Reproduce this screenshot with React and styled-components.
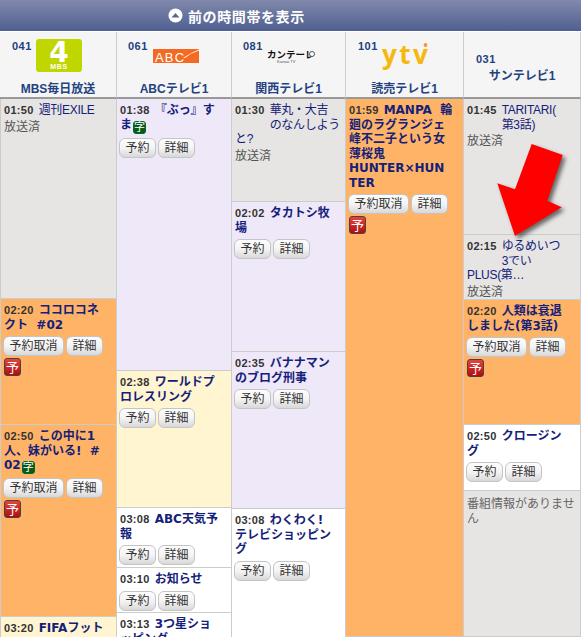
import React from 'react';
import styled, { createGlobalStyle } from 'styled-components';

const Global = createGlobalStyle`
  html, body { margin: 0; padding: 0; background: #fff; }
  body { font-family: "Liberation Sans", "Noto Sans CJK JP", sans-serif; }
`;

const Page = styled.div`
  position: relative;
  width: 581px;
  height: 637px;
  overflow: hidden;
  background: #fff;
`;

const TopBar = styled.div`
  height: 31px;
  margin-bottom: 1px;
  display: flex;
  align-items: center;
  gap: 5px;
  padding-left: 168px;
  background: linear-gradient(#8089ab, #505f91);
  color: #fff;
  font-size: 14px;
  font-weight: bold;
  letter-spacing: 0.6px;
`;

const Grid = styled.div`
  display: grid;
  grid-template-columns: 117px 115px 114px 118px 117px;
`;

const HeaderCell = styled.div`
  height: 67px;
  box-sizing: border-box;
  display: flex;
  flex-direction: column;
  justify-content: ${(p) => (p.$plain ? 'flex-start' : 'space-between')};
  padding: ${(p) => (p.$plain ? '20px 0 0' : '7px 0 0')};
  background: #f5f5f5;
  border-right: 1px solid #ccc;
  border-bottom: 2px solid #999;
`;

const LogoRow = styled.div`
  display: flex;
  align-items: flex-start;
  height: 34px;
  padding-left: ${(p) => p.$left}px;
  gap: ${(p) => p.$gap}px;
`;

const LogoSlot = styled.div`
  margin-top: ${(p) => p.$top}px;
`;

const ChannelNo = styled.div`
  color: #23427f;
  font-size: 11px;
  font-weight: bold;
  letter-spacing: 0.5px;
  line-height: 13px;
  margin-top: 1px;
  padding-left: ${(p) => p.$left || 0}px;
`;

const ChannelName = styled.div`
  color: #23427f;
  font-size: 12px;
  font-weight: bold;
  line-height: 16px;
  text-align: center;
  margin-top: ${(p) => p.$top || 0}px;
`;

const Column = styled.div`
  height: 538px;
  overflow: hidden;
  border-right: 1px solid #ccc;
  border-left: ${(p) => (p.$first ? '1px solid #ccc' : '0')};
`;

const tones = {
  done: '#e6e5e3',
  reserved: '#ffb366',
  lilac: '#efe8f8',
  yellow: '#fff5d0',
  white: '#ffffff',
  none: '#e6e5e3',
};

const Programme = styled.div`
  height: ${(p) => p.$h}px;
  box-sizing: border-box;
  overflow: hidden;
  padding: 4px 0 0 3px;
  background: ${(p) => tones[p.$tone]};
  border-bottom: 1px solid #ccc;
  font-size: 12px;
  line-height: 14.5px;
`;

const Time = styled.span`
  float: ${(p) => (p.$side ? 'left' : 'none')};
  height: ${(p) => (p.$side ? '15px' : 'auto')};
  color: #333;
  font-size: 11px;
  font-weight: bold;
  letter-spacing: 0.3px;
  margin-right: 5px;
`;

const Title = styled.span`
  color: #14217a;
  font-family: ${(p) => (p.$plain ? '"Liberation Sans"' : '"DejaVu Sans"')}, "Noto Sans CJK JP", sans-serif;
  font-weight: ${(p) => (p.$plain ? 'normal' : 'bold')};
  letter-spacing: ${(p) => (p.$plain ? '-0.3px' : '0')};
  white-space: pre-wrap;
`;

const Status = styled.div`
  clear: both;
  color: #555;
  font-size: 12px;
  line-height: 15px;
  margin-top: 2px;
`;

const Actions = styled.div`
  display: flex;
  gap: 2px;
  margin: 4px 0 0 -1px;
`;

const Button = styled.div`
  width: ${(p) => p.$w}px;
  height: 20px;
  box-sizing: border-box;
  display: flex;
  align-items: center;
  justify-content: center;
  border: 1px solid #c4c4c4;
  border-radius: 6px;
  background: linear-gradient(#fdfdfd 0%, #f4f4f4 50%, #d8d8d8 100%);
  color: #333;
  font-size: 12px;
  line-height: 1;
`;

const SubBadge = styled.span`
  display: inline-flex;
  align-items: center;
  justify-content: center;
  width: 13px;
  height: 13px;
  box-sizing: border-box;
  margin-left: 1px;
  border: 1px solid #063;
  border-radius: 3px;
  background: #0a5a12;
  color: #fff;
  font-size: 11px;
  line-height: 1;
  vertical-align: -2px;
`;

const RedBadge = styled.div`
  display: flex;
  align-items: center;
  justify-content: center;
  width: 17px;
  height: 18px;
  box-sizing: border-box;
  margin-top: 2px;
  border: 1px solid #444;
  border-radius: 3px;
  background: linear-gradient(#e8443c, #b00d10);
  color: #fff;
  font-size: 13px;
  line-height: 1;
`;

const ArrowMark = styled.svg`
  position: absolute;
  left: 490px;
  top: 138px;
  filter: drop-shadow(3px 3px 2px rgba(0, 0, 0, 0.55));
`;

const Notice = styled.div`
  color: #666;
  font-size: 12px;
  line-height: 15px;
  margin-top: 2px;
  white-space: pre-line;
`;

const UpIcon = () => (
  <svg width="15" height="15" viewBox="0 0 15 15">
    <circle cx="7.5" cy="7.5" r="7" fill="#fff" />
    <path d="M3.5 9.5 L7.5 5 L11.5 9.5 Z" fill="#5a6796" />
  </svg>
);

const Mbs = () => (
  <svg width="46" height="33" viewBox="0 0 46 33">
    <rect width="46" height="33" rx="3" fill="#bfd600" />
    <text x="23" y="23" textAnchor="middle" fontSize="28" fontWeight="bold" fill="#fff" fontFamily="DejaVu Sans">4</text>
    <text x="23" y="29.5" textAnchor="middle" fontSize="7" fontWeight="bold" letterSpacing="0.6" fill="#fff" fontFamily="Liberation Sans">MBS</text>
  </svg>
);

const Abc = () => (
  <svg width="46" height="15" viewBox="0 0 46 15">
    <rect width="46" height="14" fill="#f56a20" />
    <text x="2" y="13" fontSize="13" fill="#fff" letterSpacing="1.2" fontFamily="Liberation Sans">ABC</text>
    <path d="M30 9 Q37 4 46 0.5 L46 1.5 Q38 4 32 9 Z" fill="#fff" />
  </svg>
);

const Ktv = () => (
  <svg width="48" height="16" viewBox="0 0 48 16">
    <text x="0" y="10" fontSize="9.5" fontWeight="bold" fill="#111" fontFamily="Noto Sans CJK JP">カンテーレ</text>
    <text x="10" y="15" fontSize="4" fill="#555" fontFamily="Liberation Sans">Kansai TV</text>
    <circle cx="45" cy="6" r="2.5" fill="#fff" stroke="#555" />
  </svg>
);

const Ytv = () => (
  <svg width="46" height="30" viewBox="0 0 46 30">
    <text x="0" y="21" fontSize="26" fontWeight="700" fill="#f5b80c" letterSpacing="2.5" fontFamily="Open Sans">ytv</text>
    <circle cx="43.5" cy="2" r="1.9" fill="#f59a20" />
  </svg>
);

const channels = [
  { no: '041', name: 'MBS毎日放送', left: 12, gap: 4, logo: <Mbs />, top: 0 },
  { no: '061', name: 'ABCテレビ1', left: 11, gap: 5, logo: <Abc />, top: 10 },
  { no: '081', name: '関西テレビ1', left: 11, gap: 4, logo: <Ktv />, top: 9 },
  { no: '101', name: '読売テレビ1', left: 12, gap: 4, logo: <Ytv />, top: 4 },
  { no: '031', name: 'サンテレビ1', plain: true },
];

const Reserve = ({ taken }) => (
  <Actions>
    <Button $w={taken ? 61 : 37}>{taken ? '予約取消' : '予約'}</Button>
    <Button $w={37}>詳細</Button>
  </Actions>
);

const Show = ({ h, tone, time, title, sub, taken, bookable, plain, done }) => (
  <Programme $h={h} $tone={tone}>
    <Time $side={plain}>{time}</Time>
    <Title $plain={plain}>{title}</Title>
    {sub && <SubBadge>字</SubBadge>}
    {done && <Status>放送済</Status>}
    {bookable && <Reserve taken={taken} />}
    {taken && <RedBadge>予</RedBadge>}
  </Programme>
);

const schedule = [
  [
    { h: 200, tone: 'done', time: '01:50', title: '週刊EXILE', plain: true, done: true },
    { h: 126, tone: 'reserved', time: '02:20', title: 'ココロコネ\nクト  #02', bookable: true, taken: true },
    { h: 192, tone: 'reserved', time: '02:50', title: 'この中に1\n人、妹がいる!  #\n02', sub: true, bookable: true, taken: true },
    { h: 60, tone: 'yellow', time: '03:20', title: 'FIFAフット' },
  ],
  [
    { h: 272, tone: 'lilac', time: '01:38', title: '『ぶっ』す\nま', sub: true, bookable: true },
    { h: 137, tone: 'yellow', time: '02:38', title: 'ワールドプ\nロレスリング', bookable: true },
    { h: 60, tone: 'white', time: '03:08', title: 'ABC天気予\n報', bookable: true },
    { h: 45, tone: 'white', time: '03:10', title: 'お知らせ', bookable: true },
    { h: 60, tone: 'white', time: '03:13', title: '3つ星ショ\nッピング' },
  ],
  [
    { h: 103, tone: 'done', time: '01:30', title: '華丸・大吉\nのなんしよう\nと?', plain: true, done: true },
    { h: 150, tone: 'lilac', time: '02:02', title: 'タカトシ牧\n場', bookable: true },
    { h: 157, tone: 'lilac', time: '02:35', title: 'バナナマン\nのブログ刑事', bookable: true },
    { h: 140, tone: 'white', time: '03:08', title: 'わくわく!\nテレビショッピン\nグ', bookable: true },
  ],
  [
    {
      h: 538,
      tone: 'reserved',
      time: '01:59',
      title: 'MANPA  輪\n廻のラグランジェ\n峰不二子という女\n薄桜鬼\nHUNTER×HUN\nTER',
      bookable: true,
      taken: true,
    },
  ],
  [
    { h: 136, tone: 'done', time: '01:45', title: 'TARITARI(\n第3話)', plain: true, done: true },
    { h: 65, tone: 'done', time: '02:15', title: 'ゆるめいつ\n3でい\nPLUS(第…', plain: true, done: true },
    { h: 125, tone: 'reserved', time: '02:20', title: '人類は衰退\nしました(第3話)', bookable: true, taken: true },
    { h: 66, tone: 'white', time: '02:50', title: 'クロージン\nグ', bookable: true },
    { h: 146, tone: 'none', notice: '番組情報がありませ\nん' },
  ],
];

const App = () => (
  <Page>
    <Global />
    <TopBar>
      <UpIcon />
      前の時間帯を表示
    </TopBar>
    <Grid>
      {channels.map((c) => (
        <HeaderCell key={c.no} $plain={c.plain}>
          {c.plain ? (
            <ChannelNo $left={12}>{c.no}</ChannelNo>
          ) : (
            <LogoRow $left={c.left} $gap={c.gap}>
              <ChannelNo>{c.no}</ChannelNo>
              <LogoSlot $top={c.top}>{c.logo}</LogoSlot>
            </LogoRow>
          )}
          <ChannelName $top={c.plain ? 2 : 0}>{c.name}</ChannelName>
        </HeaderCell>
      ))}
      {schedule.map((shows, i) => (
        <Column key={i} $first={i === 0}>
          {shows.map((s, j) =>
            s.notice ? (
              <Programme key={j} $h={s.h} $tone={s.tone}>
                <Notice>{s.notice}</Notice>
              </Programme>
            ) : (
              <Show key={j} {...s} />
            )
          )}
        </Column>
      ))}
    </Grid>
    <ArrowMark width="85" height="110" viewBox="0 0 85 110">
      <polygon points="41.7,6 72.7,17 57.3,62.7 71.7,69.3 25,98 7.3,45.3 25,51.3" fill="#ff0000" />
    </ArrowMark>
  </Page>
);

export default App;
